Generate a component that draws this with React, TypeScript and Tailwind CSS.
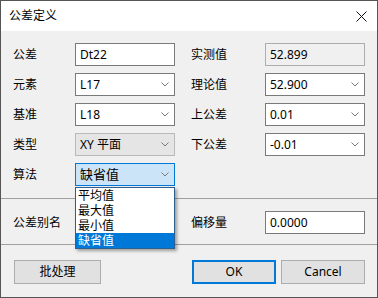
import React from 'react';

const font = "font-['Noto_Sans','Noto_Sans_CJK_SC',sans-serif]";

function Chevron() {
  return (
    <svg width="8" height="5" viewBox="0 0 8 5" className="shrink-0">
      <path d="M0.5 0.5 L4 4 L7.5 0.5" fill="none" stroke="#7a7a7a" strokeWidth="1" />
    </svg>
  );
}

type BoxProps = { value: string; combo?: boolean; kind?: 'normal' | 'readonly' | 'disabled' | 'focus' };

function Box({ value, combo, kind = 'normal' }: BoxProps) {
  const styles = {
    normal: 'bg-white border-[#7a7a7a] text-black',
    readonly: 'bg-[#f0f0f0] border-[#adadad] text-black',
    disabled: 'bg-[#e5e5e5] border-[#b9b9b9] text-black',
    focus: 'bg-[#cce4f7] border-[#0078d7] text-black',
  }[kind];
  return (
    <div className={`w-[100px] h-[23px] border flex items-center pl-[4px] pr-[5px] text-[12px] ${styles}`}>
      <span className={`flex-1 truncate ${kind === 'focus' ? 'text-[13px]' : ''}`}>{value}</span>
      {combo && <Chevron />}
    </div>
  );
}

function Row({ label, children, wide }: { label: string; children: React.ReactNode; wide?: boolean }) {
  return (
    <div className="flex items-center h-[23px]">
      <div className={`${wide ? 'w-[74px]' : 'w-[62px]'} text-[12px] text-black`}>{label}</div>
      {children}
    </div>
  );
}

export default function App() {
  const items = ['平均值', '最大值', '最小值', '缺省值'];
  return (
    <div className={`${font} relative w-[378px] h-[298px] border border-[#555555] bg-[#f0f0f0] flex flex-col`}>
      {/* Title bar */}
      <div className="h-[30px] bg-white flex items-center justify-between pl-[8px] pr-[10px]">
        <span className="text-[12px] text-black">公差定义</span>
        <svg width="11" height="11" viewBox="0 0 11 11">
          <path d="M0.5 0.5 L10.5 10.5 M10.5 0.5 L0.5 10.5" stroke="#111" strokeWidth="1" />
        </svg>
      </div>

      {/* Fields */}
      <div className="pt-[12px] pl-[12px] flex gap-[16px]">
        <div className="flex flex-col gap-[7px]">
          <Row label="公差"><Box value="Dt22" /></Row>
          <Row label="元素"><Box value="L17" combo /></Row>
          <Row label="基准"><Box value="L18" combo /></Row>
          <Row label="类型"><Box value="XY 平面" combo kind="disabled" /></Row>
          <Row label="算法"><Box value="缺省值" combo kind="focus" /></Row>
        </div>
        <div className="flex flex-col gap-[7px]">
          <Row label="实测值" wide><Box value="52.899" kind="readonly" /></Row>
          <Row label="理论值" wide><Box value="52.900" combo /></Row>
          <Row label="上公差" wide><Box value="0.01" combo /></Row>
          <Row label="下公差" wide><Box value="-0.01" combo /></Row>
        </div>
      </div>

      <div className="mt-[12px] h-px bg-[#a0a0a0]" />

      <div className="mt-[12px] pl-[12px] flex gap-[16px]">
        <Row label="公差别名"><div className="w-[100px]" /></Row>
        <Row label="偏移量" wide><Box value="0.0000" /></Row>
      </div>

      <div className="mt-[10px] h-px bg-[#a0a0a0]" />

      {/* Buttons */}
      <div className="mt-[15px] flex items-center pl-[13px] pr-[12px] text-[12px] text-black">
        <button className="w-[87px] h-[24px] bg-[#e1e1e1] border border-[#adadad]">批处理</button>
        <div className="flex-1" />
        <button className="w-[84px] h-[24px] bg-[#e1e1e1] border-2 border-[#0078d7]">OK</button>
        <button className="ml-[5px] w-[84px] h-[24px] bg-[#e1e1e1] border border-[#adadad]">Cancel</button>
      </div>

      {/* Open dropdown list */}
      <div className="absolute left-[74px] top-[186px] w-[100px] bg-white border border-[#2f5f8f] shadow-[2px_2px_3px_rgba(0,0,0,0.35)]">
        {items.map((it, i) => (
          <div
            key={it}
            className={`h-[15px] leading-[15px] pl-[2px] text-[12px] ${i === 3 ? 'bg-[#0078d7] text-white' : 'text-black'}`}
          >
            {it}
          </div>
        ))}
      </div>
    </div>
  );
}
